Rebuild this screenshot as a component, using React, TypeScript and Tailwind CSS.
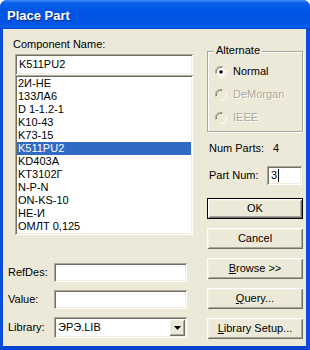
import React from "react";

const FONT = "font-['Liberation_Sans',Arial,sans-serif]";

const SUNKEN =
  "bg-white shadow-[inset_1px_1px_0_#ACA899,inset_-1px_-1px_0_#FFFFFF,inset_2px_2px_0_#716F64,inset_-2px_-2px_0_#F1EFE2]";
const RAISED =
  "bg-[#ECE9D8] shadow-[inset_1px_1px_0_#FFFFFF,inset_-1px_-1px_0_#716F64,inset_2px_2px_0_#F1EFE2,inset_-2px_-2px_0_#ACA899]";

const PARTS = [
  "2И-НЕ",
  "133ЛА6",
  "D 1-1.2-1",
  "K10-43",
  "K73-15",
  "K511PU2",
  "KD403A",
  "KT3102Г",
  "N-P-N",
  "ON-KS-10",
  "НЕ-И",
  "ОМЛТ 0,125",
];

/* ------------------------------------------------------------------ Radio */
function Radio({ label, checked, disabled }: { label: string; checked?: boolean; disabled?: boolean }) {
  return (
    <div className="flex h-[13px] items-center">
      <svg width="12" height="12" viewBox="0 0 12 12" className="shrink-0">
        <path d="M0.5 7.5 A5.5 5.5 0 0 1 7.5 0.5" fill="none" stroke="#ACA899" strokeWidth="1" />
        <path d="M1.5 7 A4.5 4.5 0 0 1 7 1.5" fill="none" stroke="#716F64" strokeWidth="1" />
        <circle cx="6" cy="6" r="3.8" fill={disabled ? "#ECE9D8" : "#FFFFFF"} />
        <path d="M4.5 11.5 A5.5 5.5 0 0 0 11.5 4.5" fill="none" stroke="#FFFFFF" strokeWidth="1" />
        <path d="M5 10.5 A4.5 4.5 0 0 0 10.5 5" fill="none" stroke="#F1EFE2" strokeWidth="1" />
        {checked ? <circle cx="6" cy="6" r="1.8" fill="#000000" /> : null}
      </svg>
      <span
        className={
          disabled
            ? "pl-[6px] text-[#ACA899] [text-shadow:1px_1px_0_#FFFFFF]"
            : "pl-[6px] text-black"
        }
      >
        {label}
      </span>
    </div>
  );
}

/* ----------------------------------------------------------------- Button */
function Btn({ children, isDefault }: { children: React.ReactNode; isDefault?: boolean }) {
  return (
    <div
      className={
        isDefault
          ? "flex h-[21px] w-[96px] items-center justify-center border border-black bg-[#ECE9D8] shadow-[inset_1px_1px_0_#FFFFFF,inset_-1px_-1px_0_#716F64,inset_2px_2px_0_#F1EFE2,inset_-2px_-2px_0_#ACA899]"
          : `flex h-[21px] w-[96px] items-center justify-center ${RAISED}`
      }
    >
      {children}
    </div>
  );
}

/* ------------------------------------------------------------------ Field */
function Field({ label, children }: { label: string; children: React.ReactNode }) {
  return (
    <div className="flex items-center">
      <span className="w-[51px] pl-[5px]">{label}</span>
      {children}
    </div>
  );
}

export default function App() {
  return (
    <div className={`${FONT} h-[350px] w-[310px] overflow-hidden text-[11px] leading-[13px] text-black`}>
      <div className="flex h-full flex-col rounded-t-[7px] bg-[#0053E0]">
        {/* title bar */}
        <div className="flex h-[29px] items-center rounded-t-[7px] bg-[linear-gradient(#3D8EF7_0px,#0A5DEB_3px,#0056E6_10px,#0053E2_22px,#0A5FEC_27px,#0046CF_29px)] pl-[7px]">
          <span className="pt-[1px] text-[13px] font-bold text-white [text-shadow:1px_1px_0_#0A2A8A]">
            Place Part
          </span>
        </div>

        {/* client */}
        <div className="flex flex-1 border-l-[3px] border-r-[4px] border-b-[4px] border-l-[#0A4FDC] border-r-[#0A4FDC] border-b-[#0A46D0]">
          <div className="flex flex-1 bg-[#ECE9D8]">
            {/* left column */}
            <div className="flex w-[190px] flex-col">
              <span className="ml-[10px] mt-[9px]">Component Name:</span>
              <div className={`ml-[12px] mt-[3px] flex h-[21px] w-[178px] items-center pl-[4px] ${SUNKEN}`}>
                K511PU2
              </div>
              <div className={`ml-[12px] h-[160px] w-[178px] py-[2px] px-[2px] ${SUNKEN}`}>
                {PARTS.map((p) => (
                  <div
                    key={p}
                    className={
                      p === "K511PU2"
                        ? "h-[13px] bg-[#316AC5] pl-[1px] text-white"
                        : "h-[13px] pl-[1px]"
                    }
                  >
                    {p}
                  </div>
                ))}
              </div>

              <div className="mt-[28px] flex flex-col gap-[8px]">
                <Field label="RefDes:">
                  <div className={`h-[19px] w-[133px] ${SUNKEN}`} />
                </Field>
                <Field label="Value:">
                  <div className={`h-[19px] w-[133px] ${SUNKEN}`} />
                </Field>
                <Field label="Library:">
                  <div className={`flex h-[21px] w-[133px] items-center justify-between pl-[4px] pr-[2px] ${SUNKEN}`}>
                    <span>ЭРЭ.LIB</span>
                    <div className={`flex h-[17px] w-[16px] items-center justify-center ${RAISED}`}>
                      <svg width="7" height="4" viewBox="0 0 7 4">
                        <path d="M0 0 H7 L3.5 4 Z" fill="#000000" />
                      </svg>
                    </div>
                  </div>
                </Field>
              </div>
            </div>

            {/* right column */}
            <div className="ml-[14px] flex w-[96px] flex-col">
              <div className="relative mt-[22px] h-[81px] border border-[#ACA899] shadow-[inset_1px_1px_0_#FFFFFF,1px_1px_0_#FFFFFF]">
                <span className="absolute left-[6px] top-[-8px] bg-[#ECE9D8] px-[2px]">Alternate</span>
                <div className="ml-[7px] mt-[13px] flex flex-col gap-[10px]">
                  <Radio label="Normal" checked />
                  <Radio label="DeMorgan" disabled />
                  <Radio label="IEEE" disabled />
                </div>
              </div>

              <div className="mt-[10px] flex items-center pl-[2px]">
                <span className="w-[64px]">Num Parts:</span>
                <span>4</span>
              </div>

              <div className="mt-[11px] flex items-center pl-[2px]">
                <span className="w-[58px]">Part Num:</span>
                <div className={`flex h-[19px] w-[35px] items-center pl-[4px] ${SUNKEN}`}>
                  3<span className="ml-[1px] h-[13px] w-[1px] bg-black" />
                </div>
              </div>

              <div className="mt-[13px] flex flex-col gap-[9px]">
                <Btn isDefault>OK</Btn>
                <Btn>Cancel</Btn>
                <Btn>
                  <span>
                    <span className="underline">B</span>rowse &gt;&gt;
                  </span>
                </Btn>
                <Btn>
                  <span>
                    <span className="underline">Q</span>uery...
                  </span>
                </Btn>
                <Btn>
                  <span>
                    <span className="underline">L</span>ibrary Setup...
                  </span>
                </Btn>
              </div>
            </div>
          </div>
        </div>
      </div>
    </div>
  );
}
